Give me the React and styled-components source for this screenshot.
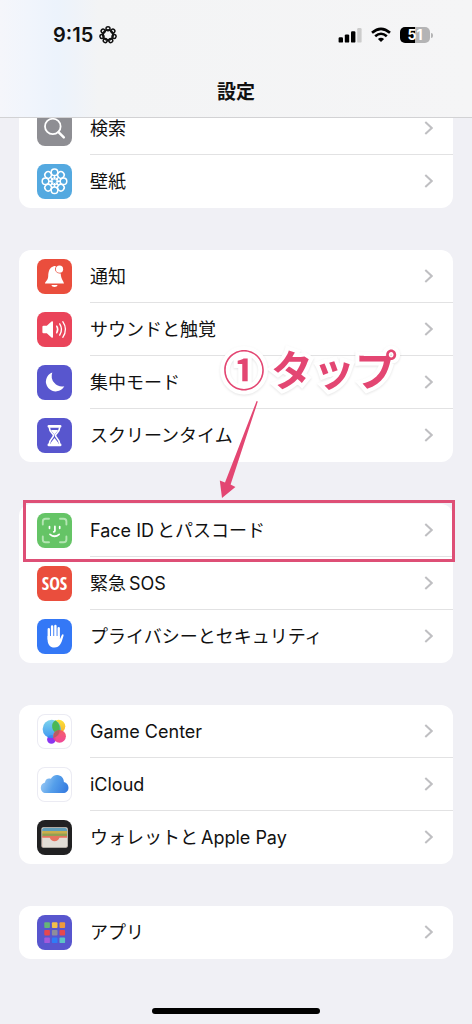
import React from 'react';
import styled, { createGlobalStyle } from 'styled-components';

const GlobalStyle = createGlobalStyle`
  * {
    box-sizing: border-box;
  }
  body {
    margin: 0;
    background: #f0f0f5;
    color: #111;
    font-family: Inter, 'Noto Sans CJK JP', sans-serif;
  }
`

const wallpaperAngles = [0, 45, 90, 135, 180, 225, 270, 315];
const focusAngles = [0, 51, 103, 154, 206, 257, 309];

const SearchIcon = () => (
  <Svg viewBox="0 0 35 35" fill="none" stroke="#fff" strokeWidth="1.8" strokeLinecap="round">
    <circle cx="15.8" cy="15.4" r="7.8" />
    <path d="M21.5 21.2 26.8 26.4" strokeWidth="2.5" />
  </Svg>
);

const WallpaperIcon = () => (
  <Svg viewBox="0 0 35 35" fill="none" stroke="#fff" strokeWidth="1.5">
    {wallpaperAngles.map(a => (
      <g key={a} transform={`rotate(${a} 17.5 17.3)`}>
        <circle cx="17.5" cy="8.3" r="3.3" />
        <path d="M17.5 11.6V15.6" />
      </g>
    ))}
    <circle cx="17.5" cy="17.3" r="3.6" strokeWidth="1" />
  </Svg>
);

const BellIcon = () => (
  <Svg viewBox="0 0 35 35" fill="#fff">
    <path d="M8 24.6C8 22.7 11 21.6 11.2 17.3C11.4 11.8 12.6 8.6 16.2 7.4C17.4 6.6 18.5 7 19.1 7.4A4.4 4.4 0 0 0 23.7 14.4C23.9 20 27 22.7 27 24.6Z" />
    <circle cx="22.5" cy="10.2" r="3.6" />
    <path d="M14.3 26H20.7A3.3 2.8 0 0 1 14.3 26Z" />
  </Svg>
);

const SoundIcon = () => (
  <Svg viewBox="0 0 35 35" fill="none" stroke="#fff" strokeLinecap="round">
    <path d="M5.4 14.8Q5.4 13.7 6.5 13.7H9.8L14.5 9.6Q16 8.6 16 10.2V24.8Q16 26.4 14.5 25.4L9.8 21.3H6.5Q5.4 21.3 5.4 20.2Z" fill="#fff" stroke="none" />
    <path d="M19.7 14.2Q21.8 17.5 19.7 20.8" strokeWidth="1.5" />
    <path d="M22.7 11.9Q26.3 17.5 22.7 23.1" strokeWidth="1.4" />
    <path d="M25.8 9.7Q31.2 17.5 25.8 25.3" strokeWidth="1.3" />
  </Svg>
);

const MoonIcon = () => (
  <Svg viewBox="0 0 35 35" fill="#fff">
    <path d="M15.3 7.4A9.8 9.8 0 1 0 27.3 21.3A10.6 10.6 0 0 1 15.3 7.4Z" />
  </Svg>
);

const HourglassIcon = () => (
  <Svg viewBox="0 0 35 35" fill="none" stroke="#fff" strokeWidth="1.6">
    <path d="M12.3 9.2C12.3 14.2 16.5 15.5 16.5 17.6C16.5 19.7 12.3 21 12.3 26.2M22.7 9.2C22.7 14.2 18.5 15.5 18.5 17.6C18.5 19.7 22.7 21 22.7 26.2" />
    <path d="M11.9 8.3H23.1M11.9 26.9H23.1" strokeWidth="2.8" strokeLinecap="round" />
    <path d="M14 12H21C20.4 14 18.2 15 17.5 17C16.8 15 14.6 14 14 12ZM17.5 20L21 24.5V26H14V24.5Z" fill="#fff" stroke="none" />
  </Svg>
);

const FaceIdIcon = () => (
  <Svg viewBox="0 0 35 35" fill="none" stroke="#fff" strokeLinecap="round">
    <path d="M5.8 11.6V8.6Q5.8 5.8 8.6 5.8H12M23 5.8H26.6Q29.4 5.8 29.4 8.6V11.6M29.4 23.4V26.4Q29.4 29.2 26.6 29.2H23M12 29.2H8.6Q5.8 29.2 5.8 26.4V23.4" stroke="#b4e5b3" strokeWidth="1.9" />
    <path d="M12.5 13.5V15.3M22.7 13.5V15.3M17.9 13.4V17.8Q17.9 18.8 16.7 18.8M13 21.3Q17.6 25.2 22.2 21.3" strokeWidth="1.7" />
  </Svg>
);

const HandIcon = () => (
  <Svg viewBox="0 0 35 35" fill="none" stroke="#fff" strokeWidth="2.4" strokeLinecap="round">
    <path d="M11.8 10.2V20M15.1 7.4V18M18.4 7V18M21.7 9.2V18" />
    <path d="M10.6 17H22.9V20.2L24.6 16.4Q25.7 14.7 26.6 15.8Q26.8 16.4 25.9 18.8C24.5 23.8 22.8 28.6 17.5 28.6C12.7 28.6 10.6 25 10.6 20.5Z" fill="#fff" stroke="none" />
  </Svg>
);

const GameCenterIcon = () => (
  <Svg viewBox="0 0 35 35">
    <defs>
      <linearGradient id="gcBlue" x1="0" y1="0" x2="0" y2="1">
        <stop offset="0" stopColor="#6fd0ea" />
        <stop offset="1" stopColor="#2b8df0" />
      </linearGradient>
      <linearGradient id="gcYellow" x1="0" y1="0" x2="0" y2="1">
        <stop offset="0" stopColor="#fbe33a" />
        <stop offset="1" stopColor="#f6b32c" />
      </linearGradient>
      <linearGradient id="gcPink" x1="0" y1="0" x2="0" y2="1">
        <stop offset="0" stopColor="#f5555c" />
        <stop offset="1" stopColor="#ee3a92" />
      </linearGradient>
    </defs>
    <circle cx="21.7" cy="12.3" r="6.6" fill="url(#gcYellow)" />
    <circle cx="14.4" cy="25.4" r="4.3" fill="#8a35f0" />
    <circle cx="14.8" cy="14.9" r="9.2" fill="url(#gcBlue)" opacity="0.9" />
    <path d="M19 6.8A9.2 9.2 0 0 1 21.6 18.9A6.6 6.6 0 0 1 19 6.3Z" fill="#49b855" />
    <circle cx="22.5" cy="22.3" r="6.4" fill="url(#gcPink)" opacity="0.93" />
    <path d="M17 19.5A6.4 6.4 0 0 1 22.8 16A9.2 9.2 0 0 1 16.3 23.9Z" fill="#a76159" opacity="0.75" />
  </Svg>
);

const CloudIcon = () => (
  <Svg viewBox="0 0 35 35">
    <defs>
      <linearGradient id="cloud" x1="0" y1="0.3" x2="1" y2="0.6">
        <stop offset="0" stopColor="#9ccbf5" />
        <stop offset="0.5" stopColor="#559fea" />
        <stop offset="1" stopColor="#377de0" />
      </linearGradient>
    </defs>
    <path d="M9 26.1C5.7 26.1 3.8 23.5 3.8 20.7C3.8 18 5.6 16 8 15.5C8 12.4 11.2 10.6 13.8 11.8C15.3 9.2 17.5 7.8 20.2 7.9C24.3 8.1 27 11.3 26.9 15C29.7 15.6 31.5 18 31.5 20.7C31.5 23.8 29.3 26.1 26 26.1Z" fill="url(#cloud)" />
  </Svg>
);

const WalletIcon = () => (
  <Svg viewBox="0 0 35 35">
    <rect x="4.4" y="7.2" width="26.4" height="20.6" rx="1.8" fill="#ded9d0" />
    <path d="M5.2 9.6Q5.2 8 6.8 8H28.4Q30 8 30 9.6V11.4H5.2Z" fill="#609eb9" />
    <path d="M5.2 11H30V14.2H5.2Z" fill="#c9ae4c" />
    <path d="M5.2 13.6H30V16.6H5.2Z" fill="#91a052" />
    <path d="M5.2 16H30V26Q30 27 29 27H6.2Q5.2 27 5.2 26Z" fill="#e5735f" />
    <path d="M5.2 17.8H12.8Q14 21.2 17.6 21.2Q21.2 21.2 22.4 17.8H30V26Q30 27 29 27H6.2Q5.2 27 5.2 26Z" fill="#e2ded6" />
  </Svg>
);

const appColors = ['#67b578', '#f3c04b', '#ee9a3c', '#e8484d', '#8e8e9b', '#e8484d', '#a259dc', '#2f7cf6', '#5dc3c5'];

const AppsIcon = () => (
  <Svg viewBox="0 0 35 35">
    {appColors.map((c, i) => (
      <rect key={i} x={7.3 + (i % 3) * 7.6} y={7.3 + Math.floor(i / 3) * 7.6} width="5.6" height="5.6" rx="0.9" fill={c} />
    ))}
  </Svg>
);

const SosIcon = () => <Sos>SOS</Sos>;

const groups = [
  [
    { text: ['検索'], bg: '#8e8e93', icon: <SearchIcon /> },
    { text: ['壁紙'], bg: '#54a9e0', icon: <WallpaperIcon /> },
  ],
  [
    { text: ['通知'], bg: '#ea4e3d', icon: <BellIcon /> },
    { text: ['サウンドと触覚'], bg: '#ea445a', icon: <SoundIcon /> },
    { text: ['集中モード'], bg: '#5856ce', icon: <MoonIcon /> },
    { text: ['スクリーンタイム'], bg: '#5856ce', icon: <HourglassIcon /> },
  ],
  [
    { text: ['Face ID', 'とパスコード'], bg: '#65c466', icon: <FaceIdIcon />, marked: true },
    { text: ['緊急', 'SOS'], bg: '#ea4e3d', icon: <SosIcon /> },
    { text: ['プライバシーとセキュリティ'], bg: '#3478f6', icon: <HandIcon /> },
  ],
  [
    { text: ['Game Center'], bg: '#fff', outlined: true, icon: <GameCenterIcon /> },
    { text: ['iCloud'], bg: '#fff', outlined: true, icon: <CloudIcon /> },
    { text: ['ウォレットと', 'Apple Pay'], bg: '#212122', icon: <WalletIcon /> },
  ],
  [
    { text: ['アプリ'], bg: '#5856ce', icon: <AppsIcon /> },
  ],
];

const StatusBar = () => (
  <Status>
    <Clock>
      9:15
      <svg width="18" height="18" viewBox="0 0 18 18" fill="none" stroke="#111" strokeWidth="1.5">
        <circle cx="9" cy="9" r="5.2" strokeWidth="1.8" />
        {focusAngles.map(a => (
          <circle key={a} cx="9" cy="2.8" r="2" transform={`rotate(${a} 9 9)`} />
        ))}
      </svg>
    </Clock>
    <StatusIcons>
      <svg width="24" height="16" viewBox="0 0 24 16" fill="#000">
        <rect x="0.6" y="10.2" width="4.4" height="5.4" rx="1.2" />
        <rect x="6.8" y="7.4" width="4.4" height="8.2" rx="1.2" />
        <rect x="13" y="4.2" width="4.4" height="11.4" rx="1.2" />
        <rect x="19.2" y="1" width="4.4" height="14.6" rx="1.2" fill="#ccc" />
      </svg>
      <svg width="20" height="16" viewBox="0 0 20 16" fill="none" stroke="#000" strokeWidth="2.6">
        <path d="M1 5.8Q10 -2.2 19 5.8" />
        <path d="M4.2 9.3Q10 4.2 15.8 9.3" />
        <path d="M10 15 6.9 11.9Q10 9.4 13.1 11.9Z" fill="#000" stroke="none" />
      </svg>
      <BatteryGroup>
        <Battery>51</Battery>
        <BatteryTip />
      </BatteryGroup>
    </StatusIcons>
  </Status>
);

const SettingsRow = ({ item }) => (
  <Row>
    <RowButton type="button">
      <IconTile $bg={item.bg} $outlined={item.outlined}>{item.icon}</IconTile>
      <RowBody>
        <Label>
          {item.text.map(part => <span key={part}>{part}</span>)}
        </Label>
        <Chevron width="9" height="14" viewBox="0 0 9 14">
          <path d="M1.3 1 7.7 7 1.3 13" />
        </Chevron>
      </RowBody>
    </RowButton>
    {item.marked && (
      <>
        <Marker />
        <Note><span>①</span><span>タップ</span></Note>
        <Arrow width="50" height="102" viewBox="0 0 50 102">
          <path d="M42.6 3 43.8 3.6 16.6 86.6 21.4 89 8 100 5.8 82.6 11 84.6Z" />
        </Arrow>
      </>
    )}
  </Row>
);

const App = () => (
  <Page>
    <GlobalStyle />
    <Header>
      <StatusBar />
      <Title>設定</Title>
    </Header>
    <Main>
      {groups.map((items, i) => (
        <Card key={i}>
          {items.map((item, j) => <SettingsRow key={j} item={item} />)}
        </Card>
      ))}
    </Main>
    <HomeIndicator />
  </Page>
);

const Page = styled.div`
  display: flex;
  flex-direction: column;
  min-height: 100vh;
`
const Header = styled.header`
  position: sticky;
  top: 0;
  z-index: 2;
  padding-top: 20px;
  border-bottom: 1px solid #d2d2d4;
  background: linear-gradient(90deg, #f5f6fb 0%, #f1f5fc 6%, #ecf3fc 12%, #eff3f9 16%, #f3f4f5 21%, #f5f5f6 100%);
`
const Status = styled.div`
  display: flex;
  align-items: center;
  justify-content: space-between;
  height: 30px;
  padding: 0 39px 0 53px;
`
const Clock = styled.div`
  display: flex;
  align-items: center;
  gap: 6px;
  font-size: 20px;
  font-weight: 600;
`
const StatusIcons = styled.div`
  display: flex;
  align-items: center;
  gap: 9px;
`
const BatteryGroup = styled.div`
  display: flex;
  align-items: center;
  gap: 1px;
`
const Battery = styled.span`
  width: 30px;
  border-radius: 5px;
  background: linear-gradient(90deg, #000 50%, #b4b4b5 50%);
  color: #fff;
  font-size: 14px;
  font-weight: 700;
  line-height: 16px;
  text-align: center;
`
const BatteryTip = styled.span`
  width: 2px;
  height: 5px;
  border-radius: 0 2px 2px 0;
  background: #b4b4b5;
`
const Title = styled.h1`
  margin: 0;
  padding: 28px 0 9px;
  font-size: 19px;
  font-weight: 700;
  line-height: 30px;
  text-align: center;
`
const Main = styled.main`
  display: flex;
  flex: 1;
  flex-direction: column;
  gap: 42px;
  margin-top: -16px;
  padding: 0 19px;
`
const Card = styled.ul`
  margin: 0;
  padding: 0;
  border-radius: 12px;
  background: #fff;
  list-style: none;
`
const RowBody = styled.span`
  display: flex;
  flex: 1;
  align-items: center;
  justify-content: space-between;
  height: 53px;
  padding-right: 20px;
  border-bottom: 1px solid #e2e2e3;
`
const Row = styled.li`
  position: relative;

  &:last-child ${RowBody} {
    border-bottom-color: transparent;
  }
`
const RowButton = styled.button`
  display: flex;
  align-items: center;
  gap: 18px;
  width: 100%;
  padding: 0 0 0 18px;
  border: 0;
  background: none;
  color: inherit;
  font: inherit;
  text-align: left;
`
const IconTile = styled.span`
  display: flex;
  align-items: center;
  justify-content: center;
  width: 35px;
  height: 35px;
  border-radius: 8px;
  background: ${props => props.$bg};
  box-shadow: ${props => props.$outlined ? 'inset 0 0 0 1px #ebebf3' : 'none'};
`
const Svg = styled.svg`
  width: 35px;
  height: 35px;
`
const Sos = styled.span`
  color: #fff;
  font-family: 'Liberation Sans Narrow', 'Open Sans Condensed', Roboto, sans-serif;
  font-size: 18px;
  font-weight: 700;
  line-height: 35px;
`
const Label = styled.span`
  display: flex;
  align-items: baseline;
  gap: 3px;
  padding-top: 2px;
  font-size: 18px;
  line-height: 26px;
`
const Chevron = styled.svg`
  fill: none;
  stroke: #bfbfc2;
  stroke-width: 2;
`
const Marker = styled.span`
  position: absolute;
  inset: -4px -2px -5px 4px;
  border: 3px solid #de4f76;
  pointer-events: none;
`
const Note = styled.strong`
  position: absolute;
  top: -166px;
  left: 204px;
  display: flex;
  gap: 6px;
  color: #e34672;
  font-family: 'Noto Sans CJK JP', sans-serif;
  font-size: 42px;
  font-weight: 700;
  line-height: 60px;
  white-space: nowrap;
  -webkit-text-stroke: 8px #fff;
  paint-order: stroke fill;
  filter: drop-shadow(0 1px 1px rgba(0, 0, 0, 0.1));
  pointer-events: none;
`
const Arrow = styled.svg`
  position: absolute;
  top: -106px;
  left: 195px;
  fill: #e34672;
  pointer-events: none;
`
const HomeIndicator = styled.div`
  width: 168px;
  height: 6px;
  margin: 0 auto 10px;
  border-radius: 3px;
  background: #000;
`

export default App;
